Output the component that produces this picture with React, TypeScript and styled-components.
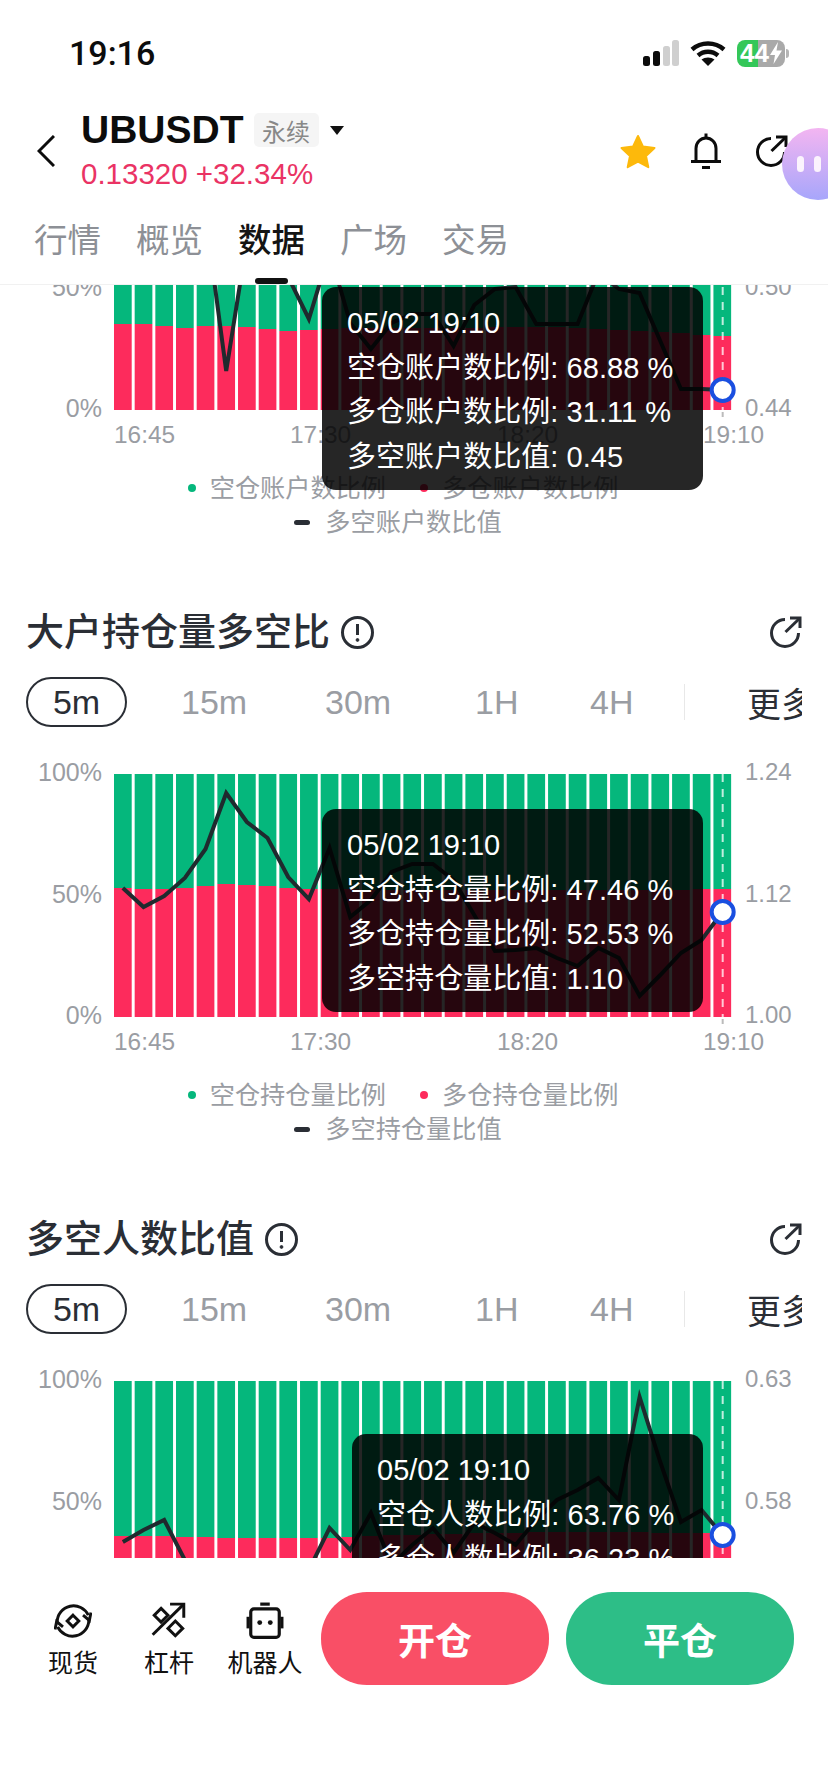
// Libraries
import styled, { createGlobalStyle } from 'styled-components';

const FONT_STACK = '"Liberation Sans", "Noto Sans CJK SC", sans-serif';
const INK = '#2a2e35';
const GREY = '#9a9da3';
const GREEN = '#05b77c';
const RED = '#fd2b5c';

const BAR_PITCH = 20.67;
const BAR_WIDTH = 17.7;
const PLOT_WIDTH = 618;
const PLOT_HEIGHT = 243;

// Global
const GlobalStyle = createGlobalStyle`
html, body {
  margin: 0;
  padding: 0;
  background: #fff;
  font-family: ${FONT_STACK};
}
`;

// Page frame
const Page = styled.div`
position: relative;
width: 828px;
height: 1792px;
display: flex;
flex-direction: column;
overflow: hidden;
background: #fff;
`;

const Header = styled.header`
flex: none;
position: relative;
z-index: 2;
background: #fff;
border-bottom: 1px solid #f1f1f1;
`;

// Status bar
const StatusBar = styled.div`
height: 104px;
display: flex;
align-items: center;
padding: 2px 43px 0 69px;
box-sizing: border-box;
`;

const Clock = styled.span`
font-family: Roboto, sans-serif;
font-size: 34px;
font-weight: 500;
color: #0c0c0c;
`;

const StatusIcons = styled.div`
margin-left: auto;
display: flex;
align-items: center;
gap: 11px;
`;

const Battery = styled.div`
position: relative;
width: 48px;
height: 27px;
border-radius: 8px;
display: flex;
align-items: center;
justify-content: center;
gap: 1px;
background: linear-gradient(90deg, #34c759 44%, #a9a9a9 44%);
color: #fff;
font-size: 26px;
font-weight: 700;

&::after {
  content: '';
  position: absolute;
  right: -4px;
  top: 9px;
  width: 3px;
  height: 9px;
  border-radius: 0 3px 3px 0;
  background: #b5b5b5;
}
`;

// Symbol row
const NavRow = styled.div`
height: 94px;
display: flex;
align-items: center;
padding: 0 40px 0 37px;
`;

const TitleBlock = styled.div`
align-self: flex-start;
margin-left: 26px;
`;

const SymbolLine = styled.div`
height: 52px;
display: flex;
align-items: center;
`;

const Symbol = styled.span`
font-size: 39px;
font-weight: 700;
color: #0c0c0c;
`;

const SymbolTag = styled.span`
margin-left: 10px;
width: 65px;
height: 34px;
border-radius: 5px;
background: #f5f5f5;
color: #888;
font-size: 24px;
display: flex;
align-items: center;
justify-content: center;
`;

const Caret = styled.span`
margin-left: 11px;
width: 0;
height: 0;
border-left: 7px solid transparent;
border-right: 7px solid transparent;
border-top: 9px solid #111;
`;

const Price = styled.div`
font-size: 29.5px;
line-height: 36px;
color: #ea3364;
`;

const NavActions = styled.div`
margin-left: auto;
display: flex;
align-items: center;
gap: 35px;
color: #0c0c0c;
`;

// Page tabs
const TabRow = styled.nav`
margin-top: 21px;
padding-left: 34px;
display: flex;
gap: 35px;
`;

const Tab = styled.div<{ $active?: boolean }>`
display: flex;
flex-direction: column;
align-items: center;
gap: 15px;
width: 67px;
font-size: 33.5px;
line-height: 44px;
font-weight: ${(p) => (p.$active ? 500 : 400)};
color: ${(p) => (p.$active ? '#141414' : '#8d9096')};
`;

const TabMark = styled.span<{ $active?: boolean }>`
width: 33px;
height: 6px;
border-radius: 3px;
background: ${(p) => (p.$active ? '#111' : 'transparent')};
`;

// Floating assistant bubble
const Bubble = styled.div`
position: absolute;
z-index: 3;
left: 782px;
top: 128px;
width: 72px;
height: 72px;
border-radius: 50%;
background: linear-gradient(180deg, #f3b5f1 0%, #a7a6fb 100%);
display: flex;
align-items: center;
gap: 10px;
padding-left: 15px;
box-sizing: border-box;
`;

const BubbleEye = styled.span`
width: 7px;
height: 16px;
border-radius: 4px;
background: #fbf3fd;
`;

// Scrolled chart list
const Scroller = styled.main`
flex: 1;
min-height: 0;
overflow: hidden;
`;

const ChartList = styled.div`
margin-top: -281px;
`;

const Section = styled.section`
width: 776px;
margin-left: 26px;
padding-bottom: 72px;
overflow: hidden;
`;

const SectionHead = styled.div`
height: 40px;
padding-top: 1px;
display: flex;
align-items: center;
gap: 11px;
color: ${INK};
margin-bottom: -1px;
`;

const SectionTitle = styled.h2`
margin: 0;
font-size: 38px;
font-weight: 500;
line-height: 40px;
color: ${INK};
`;

const ShareSlot = styled.span`
margin-left: auto;
display: flex;
`;

// Interval switcher
const RangeRow = styled.div`
margin-top: 26px;
height: 50px;
display: grid;
grid-template-columns: 155px 144px 150px 115px 94px 63px auto;
align-items: center;
font-size: 34px;
color: ${GREY};
`;

const RangePill = styled.div`
width: 101px;
height: 50px;
box-sizing: border-box;
border: 2px solid ${INK};
border-radius: 25px;
display: flex;
align-items: center;
justify-content: center;
color: ${INK};
`;

const RangeDivider = styled.span`
width: 1px;
height: 36px;
background: #e8e8e8;
`;

const RangeMore = styled.span`
color: ${INK};
white-space: nowrap;
`;

// Chart grid
const ChartGrid = styled.div`
margin-top: 47px;
display: grid;
grid-template-columns: 88px ${PLOT_WIDTH}px auto;
grid-template-rows: ${PLOT_HEIGHT}px;
`;

const AxisColumn = styled.div<{ $end?: boolean }>`
margin: -16px 0 -12px;
padding: ${(p) => (p.$end ? '0 0 0 13px' : '0 12px 0 0')};
display: flex;
flex-direction: column;
justify-content: space-between;
align-items: ${(p) => (p.$end ? 'flex-start' : 'flex-end')};
font-size: ${(p) => (p.$end ? 24 : 25)}px;
line-height: 28px;
color: ${GREY};
`;

const Plot = styled.div`
position: relative;
`;

const PlotSvg = styled.svg`
display: block;
overflow: visible;
`;

const Tooltip = styled.div<{ $left: number; $top: number }>`
position: absolute;
z-index: 1;
left: ${(p) => p.$left}px;
top: ${(p) => p.$top}px;
right: 29px;
padding: 14px 25px 10px;
border-radius: 14px;
background: rgba(0, 0, 0, 0.85);
color: #fff;
font-size: 29px;
line-height: 44.7px;
white-space: nowrap;
`;

const TipRow = styled.div`
letter-spacing: 0.05px;
`;

const TimeAxis = styled.div`
margin: 11px 0 0 88px;
display: grid;
grid-template-columns: 176px 207px 206px auto;
font-size: 24.4px;
line-height: 28px;
color: ${GREY};
`;

const Legend = styled.div`
margin-top: 22px;
width: 754px;
font-size: 25.2px;
line-height: 34px;
color: ${GREY};
`;

const LegendRow = styled.div<{ $shift?: number }>`
display: flex;
justify-content: center;
gap: 34px;
margin-right: ${(p) => p.$shift ?? 0}px;
`;

const LegendItem = styled.span`
display: flex;
align-items: center;
white-space: nowrap;
`;

const LegendDot = styled.i<{ $color: string }>`
width: 8px;
height: 8px;
margin-right: 14px;
border-radius: 50%;
background: ${(p) => p.$color};
`;

const LegendDash = styled.i`
width: 16px;
height: 5px;
margin-right: 15px;
border-radius: 3px;
background: ${INK};
`;

// Bottom action bar
const Footer = styled.footer`
flex: none;
height: 234px;
box-sizing: border-box;
padding: 34px 0 0 25px;
display: flex;
align-items: flex-start;
background: #fff;
`;

const Tool = styled.div`
width: 96px;
padding-top: 10px;
display: flex;
flex-direction: column;
align-items: center;
gap: 8px;
color: #111;
font-size: 25px;
line-height: 30px;
white-space: nowrap;
`;

const TradeButton = styled.button<{ $color: string }>`
width: 228px;
height: 93px;
margin-left: ${(p) => (p.$color === '#f94f66' ? 8 : 17)}px;
padding: 0;
border: 0;
border-radius: 46px;
background: ${(p) => p.$color};
color: #fff;
font-family: inherit;
font-size: 37px;
font-weight: 700;
`;

// Icons
function SignalIcon() {
  return (
    <svg width="36" height="26" viewBox="0 0 36 26">
      <rect x="0" y="16" width="7" height="10" rx="2.5" fill="#0c0c0c" />
      <rect x="10" y="11" width="7" height="15" rx="2.5" fill="#0c0c0c" />
      <rect x="20" y="6" width="7" height="20" rx="2.5" fill="#cfcfcf" />
      <rect x="29" y="0" width="7" height="26" rx="2.5" fill="#cfcfcf" />
    </svg>
  );
}

function WifiIcon() {
  return (
    <svg width="36" height="26" viewBox="0 0 36 26" fill="none" stroke="#0c0c0c" strokeWidth="4.4">
      <path d="M2 9.5C11 1.5 25 1.5 34 9.5" />
      <path d="M8 15.5C13.8 10.5 22.2 10.5 28 15.5" />
      <path d="M18 26L11.5 19.5C15 16.8 21 16.8 24.5 19.5Z" fill="#0c0c0c" stroke="none" />
    </svg>
  );
}

function BoltIcon() {
  return (
    <svg width="12" height="22" viewBox="0 0 12 22">
      <path d="M8 0L0 13H5L3.5 22L12 8.5H6.5Z" fill="#fff" />
    </svg>
  );
}

function BackIcon() {
  return (
    <svg width="18" height="32" viewBox="0 0 18 32" fill="none" stroke="#0c0c0c" strokeWidth="3">
      <path d="M17 1L2 16L17 31" />
    </svg>
  );
}

function StarIcon() {
  return (
    <svg width="36" height="35" viewBox="0 0 36 35">
      <path
        d="M18 2L23 12.6L34.5 14L26 22L28.3 33.2L18 27.6L7.7 33.2L10 22L1.5 14L13 12.6Z"
        fill="#fdb90b"
        stroke="#fdb90b"
        strokeWidth="2"
        strokeLinejoin="round"
      />
    </svg>
  );
}

function BellIcon() {
  return (
    <svg width="30" height="36" viewBox="0 0 30 36" fill="none" stroke="currentColor" strokeWidth="3">
      <path d="M5 28V15.5C5 9.5 9.5 5 15 5C20.5 5 25 9.5 25 15.5V28" />
      <path d="M0 28.5H30" />
      <path d="M15 0.5V4" />
      <path d="M11 34.5H19" />
    </svg>
  );
}

function ShareIcon() {
  return (
    <svg width="32" height="32" viewBox="0 0 32 32" fill="none" stroke="currentColor" strokeWidth="3">
      <path d="M15 3.5A13.5 13.5 0 1 0 28.5 17" />
      <path d="M15.5 16L30 2" />
      <path d="M20 2H30V12" />
    </svg>
  );
}

function InfoIcon() {
  return (
    <svg width="33" height="33" viewBox="0 0 33 33" fill="none" stroke={INK} strokeWidth="3">
      <circle cx="16.5" cy="16.5" r="15" />
      <path d="M16.5 8V19" />
      <circle cx="16.5" cy="24" r="1.4" fill={INK} strokeWidth="1" />
    </svg>
  );
}

function SpotIcon() {
  return (
    <svg width="38" height="38" viewBox="0 0 36 36" fill="none" stroke="#111" strokeWidth="2.8">
      <path d="M3 19A15.5 15.5 0 0 1 32.5 12.5" />
      <path d="M27.5 12.5L33.5 17.5L35 10" />
      <path d="M33 17A15.5 15.5 0 0 1 3.5 23.5" />
      <path d="M8.5 23.5L2.5 18.5L1 26" />
      <path d="M18 12.5L23.5 18L18 23.5L12.5 18Z" />
    </svg>
  );
}

function LeverageIcon() {
  return (
    <svg width="38" height="38" viewBox="0 0 36 36" fill="none" stroke="#111" strokeWidth="2.8">
      <path d="M2.5 31L32 2" />
      <path d="M19 2H32V15" />
      <path d="M10.5 6L17 12.5L10.5 19L4 12.5Z" />
      <path d="M24 18L31 25L24 32L17 25Z" />
    </svg>
  );
}

function RobotIcon() {
  return (
    <svg width="38" height="38" viewBox="0 0 36 36" fill="none">
      <rect x="13.5" y="0.5" width="9" height="3" fill="#111" />
      <rect x="4.5" y="6.5" width="27" height="27" rx="3" stroke="#111" strokeWidth="3" />
      <rect x="0.5" y="14" width="3" height="11" fill="#111" />
      <rect x="32.5" y="14" width="3" height="11" fill="#111" />
      <circle cx="13" cy="19.5" r="2.3" fill="#111" />
      <circle cx="23" cy="19.5" r="2.3" fill="#111" />
    </svg>
  );
}

// Chart data: y offsets inside the plot, one per five minute bar
type ChartData = {
  title: string;
  left: string[];
  right: string[];
  split: number[];
  line: number[];
  tipLeft: number;
  tipTop: number;
  tipDate: string;
  tipRows: string[];
  legend: string[];
};

const charts: ChartData[] = [
  {
    title: '多空账户数比',
    left: ['100%', '50%', '0%'],
    right: ['0.56', '0.50', '0.44'],
    split: [157, 157, 159, 161, 159, 159, 160, 162, 164, 163, 162, 161, 161, 161, 161, 161, 161, 161, 160, 160, 160, 160, 161, 162, 163, 164, 165, 166, 168, 169],
    line: [34, 49, 69, 39, 49, 204, 74, 84, 110, 152, 84, 156, 182, 156, 147, 147, 179, 138, 122, 120, 157, 157, 157, 106, 122, 126, 174, 222, 222, 223],
    tipLeft: 208,
    tipTop: 120,
    tipDate: '05/02 19:10',
    tipRows: ['空仓账户数比例: 68.88 %', '多仓账户数比例: 31.11 %', '多空账户数比值: 0.45'],
    legend: ['空仓账户数比例', '多仓账户数比例', '多空账户数比值'],
  },
  {
    title: '大户持仓量多空比',
    left: ['100%', '50%', '0%'],
    right: ['1.24', '1.12', '1.00'],
    split: [114, 115, 115, 114, 112, 110, 111, 112, 114, 115, 115, 115, 116, 116, 116, 116, 116, 116, 116, 116, 116, 116, 116, 116, 116, 116, 116, 116, 115, 115],
    line: [114, 133, 122, 104, 75, 19, 48, 64, 103, 125, 74, 143, 126, 98, 90, 90, 106, 141, 177, 176, 174, 184, 192, 174, 184, 222, 201, 179, 166, 138],
    tipLeft: 208,
    tipTop: 35,
    tipDate: '05/02 19:10',
    tipRows: ['空仓持仓量比例: 47.46 %', '多仓持仓量比例: 52.53 %', '多空持仓量比值: 1.10'],
    legend: ['空仓持仓量比例', '多仓持仓量比例', '多空持仓量比值'],
  },
  {
    title: '多空人数比值',
    left: ['100%', '50%', '0%'],
    right: ['0.63', '0.58', '0.53'],
    split: [155, 155, 155, 156, 156, 157, 157, 157, 157, 157, 157, 156, 155, 154, 154, 153, 153, 152, 152, 152, 151, 151, 151, 151, 151, 151, 152, 152, 152, 152],
    line: [161, 149, 139, 179, 209, 209, 219, 209, 204, 189, 147, 169, 132, 184, 164, 147, 172, 142, 152, 164, 139, 119, 109, 97, 119, 16, 81, 141, 129, 154],
    tipLeft: 238,
    tipTop: 53,
    tipDate: '05/02 19:10',
    tipRows: ['空仓人数比例: 63.76 %', '多仓人数比例: 36.23 %', '多空人数比值: 0.57'],
    legend: ['空仓人数比例', '多仓人数比例', '多空人数比值'],
  },
];

const ranges = ['15m', '30m', '1H', '4H'];
const times = ['16:45', '17:30', '18:20', '19:10'];
const tabs = ['行情', '概览', '数据', '广场', '交易'];

function barX(i: number) {
  return i * BAR_PITCH;
}

function RatioPlot({ data }: { data: ChartData }) {
  const points = data.line.map((y, i) => `${barX(i) + BAR_WIDTH / 2},${y}`).join(' ');
  const lastX = barX(data.line.length - 1) + BAR_WIDTH / 2 + 0.4;
  const lastY = data.line[data.line.length - 1];

  return (
    <PlotSvg width={PLOT_WIDTH} height={PLOT_HEIGHT} viewBox={`0 0 ${PLOT_WIDTH} ${PLOT_HEIGHT}`}>
      {data.split.map((y, i) => (
        <g key={i}>
          <rect x={barX(i)} y={0} width={BAR_WIDTH} height={y} fill={GREEN} />
          <rect x={barX(i)} y={y} width={BAR_WIDTH} height={PLOT_HEIGHT - y} fill={RED} />
        </g>
      ))}
      <line x1={lastX} x2={lastX} y1={0} y2={PLOT_HEIGHT} stroke="#fff" strokeOpacity="0.75" strokeWidth="2" strokeDasharray="8 7" />
      <line x1={lastX} x2={lastX} y1={PLOT_HEIGHT + 2} y2={PLOT_HEIGHT + 7} stroke="#bbb" strokeWidth="2" />
      <polyline points={points} fill="none" stroke="#1f2a2e" strokeWidth="4" />
      <circle cx={lastX} cy={lastY} r="11" fill="#fff" stroke="#1a4fe0" strokeWidth="4" />
    </PlotSvg>
  );
}

function ChartSection({ data }: { data: ChartData }) {
  return (
    <Section>
      <SectionHead>
        <SectionTitle>{data.title}</SectionTitle>
        <InfoIcon />
        <ShareSlot><ShareIcon /></ShareSlot>
      </SectionHead>

      <RangeRow>
        <RangePill>5m</RangePill>
        {ranges.map((r) => <span key={r}>{r}</span>)}
        <RangeDivider />
        <RangeMore>更多</RangeMore>
      </RangeRow>

      <ChartGrid>
        <AxisColumn>
          {data.left.map((t) => <span key={t}>{t}</span>)}
        </AxisColumn>
        <Plot>
          <RatioPlot data={data} />
          <Tooltip $left={data.tipLeft} $top={data.tipTop}>
            <div>{data.tipDate}</div>
            {data.tipRows.map((row) => <TipRow key={row}>{row}</TipRow>)}
          </Tooltip>
        </Plot>
        <AxisColumn $end>
          {data.right.map((t) => <span key={t}>{t}</span>)}
        </AxisColumn>
      </ChartGrid>

      <TimeAxis>
        {times.map((t) => <span key={t}>{t}</span>)}
      </TimeAxis>

      <Legend>
        <LegendRow>
          <LegendItem><LegendDot $color={GREEN} />{data.legend[0]}</LegendItem>
          <LegendItem><LegendDot $color={RED} />{data.legend[1]}</LegendItem>
        </LegendRow>
        <LegendRow $shift={10}>
          <LegendItem><LegendDash />{data.legend[2]}</LegendItem>
        </LegendRow>
      </Legend>
    </Section>
  );
}

function App(): JSX.Element {
  return (
    <Page>
      <GlobalStyle />
      <Header>
        <StatusBar>
          <Clock>19:16</Clock>
          <StatusIcons>
            <SignalIcon />
            <WifiIcon />
            <Battery>44<BoltIcon /></Battery>
          </StatusIcons>
        </StatusBar>

        <NavRow>
          <BackIcon />
          <TitleBlock>
            <SymbolLine>
              <Symbol>UBUSDT</Symbol>
              <SymbolTag>永续</SymbolTag>
              <Caret />
            </SymbolLine>
            <Price>0.13320 +32.34%</Price>
          </TitleBlock>
          <NavActions>
            <StarIcon />
            <BellIcon />
            <ShareIcon />
          </NavActions>
        </NavRow>

        <TabRow>
          {tabs.map((t) => (
            <Tab key={t} $active={t === '数据'}>
              {t}
              <TabMark $active={t === '数据'} />
            </Tab>
          ))}
        </TabRow>
      </Header>

      <Bubble>
        <BubbleEye />
        <BubbleEye />
      </Bubble>

      <Scroller>
        <ChartList>
          {charts.map((c) => <ChartSection key={c.title} data={c} />)}
        </ChartList>
      </Scroller>

      <Footer>
        <Tool><SpotIcon />现货</Tool>
        <Tool><LeverageIcon />杠杆</Tool>
        <Tool><RobotIcon />机器人</Tool>
        <TradeButton $color="#f94f66">开仓</TradeButton>
        <TradeButton $color="#2dbe87">平仓</TradeButton>
      </Footer>
    </Page>
  );
}

export default App;
